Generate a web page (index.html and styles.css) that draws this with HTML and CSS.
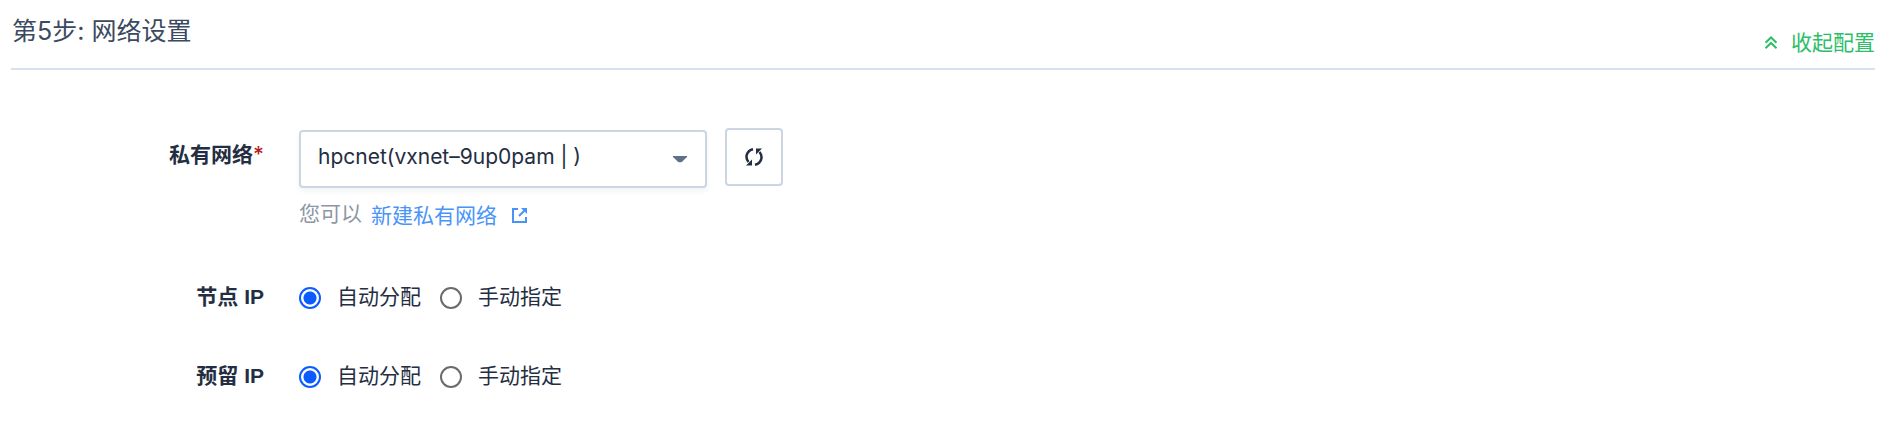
FILE: index.html
```html
<!DOCTYPE html>
<html lang="zh-CN">
<head>
<meta charset="utf-8">
<title>网络设置</title>
<link rel="stylesheet" href="styles.css">
</head>
<body>
<section class="step">
  <header class="step-header">
    <h2 class="step-title">第5步: 网络设置</h2>
    <button class="collapse" type="button">
      <svg class="collapse-icon" viewBox="0 0 14 14" aria-hidden="true"><path d="M1.5 6.7 7 1.5l5.500 5.200M1.500 12.200 7 7l5.500 5.200"/></svg>
      收起配置
    </button>
  </header>
  <form class="form">
    <div class="field field-network">
      <label class="label" for="network">私有网络<span class="required">*</span></label>
      <div class="control">
        <div class="picker">
          <select class="select" id="network">
            <option>hpcnet(vxnet–9up0pam | )</option>
          </select>
          <svg class="caret" viewBox="0 0 14 7" aria-hidden="true"><path d="M0 0h14v1L8.500 6.300h-3L0 1z"/></svg>
          <button class="refresh" type="button" aria-label="刷新">
            <svg class="refresh-icon" viewBox="0 0 18 18" aria-hidden="true">
              <path class="arc" d="M8 1.200C2 2.500-.6 9 3.500 14M10 16.800c6-1.300 8.600-7.800 4.500-12.800"/>
              <path class="head" d="M1 17.500h6v-6zM17 .5h-6v6z"/>
            </svg>
          </button>
        </div>
        <p class="help">
          <span>您可以</span>
          <a class="link" href="#">新建私有网络
            <svg class="link-icon" viewBox="0 0 16 16" aria-hidden="true">
              <path class="frame" d="M6 2H1v13h13v-5"/>
              <path class="frame" d="M7 9l5.500-5.500"/>
              <path class="head" d="M9 1h6v6z"/>
            </svg>
          </a>
        </p>
      </div>
    </div>
    <div class="field field-node" role="radiogroup" aria-labelledby="node-label">
      <span class="label" id="node-label">节点 IP</span>
      <div class="control radios">
        <label class="option"><input class="radio" type="radio" name="node" checked><span>自动分配</span></label>
        <label class="option"><input class="radio" type="radio" name="node"><span>手动指定</span></label>
      </div>
    </div>
    <div class="field" role="radiogroup" aria-labelledby="reserved-label">
      <span class="label" id="reserved-label">预留 IP</span>
      <div class="control radios">
        <label class="option"><input class="radio" type="radio" name="reserved" checked><span>自动分配</span></label>
        <label class="option"><input class="radio" type="radio" name="reserved"><span>手动指定</span></label>
      </div>
    </div>
  </form>
</section>
</body>
</html>
```
FILE: styles.css
```css
* { box-sizing: border-box; }

body {
  margin: 0;
  background: #fff;
  color: #242e42;
  font: 21px/32px Inter, "Noto Sans CJK SC", sans-serif;
}

button, select { font: inherit; color: inherit; }

.step { padding: 0 13px 0 11px; }

.step-header {
  display: flex;
  justify-content: space-between;
  align-items: flex-end;
  height: 70px;
  padding-bottom: 9px;
  border-bottom: 2px solid #d8e2ec;
}

.step-title {
  margin: 0;
  align-self: flex-start;
  padding: 15px 0 0 1px;
  font-size: 25px;
  font-weight: 400;
  line-height: 32px;
  color: #3b4a60;
}

.collapse {
  display: flex;
  align-items: center;
  gap: 13px;
  padding: 0;
  border: 0;
  background: none;
  color: #2cbe68;
  cursor: pointer;
}

.collapse-icon {
  width: 14px;
  height: 14px;
  fill: none;
  stroke: currentColor;
  stroke-width: 2;
}

.form { padding-top: 58px; }

.field {
  display: grid;
  grid-template-columns: 253px 1fr;
  column-gap: 35px;
}

.field-network { margin-bottom: 49px; }
.field-node { margin-bottom: 47px; }

.label {
  font-family: "Liberation Sans", "Noto Sans CJK SC", sans-serif;
  font-weight: 600;
  text-align: right;
}

.field-network .label { padding-top: 11px; }

.required {
  font-family: Inter, sans-serif;
  font-weight: 500;
  color: #b81d22;
}

.picker {
  display: flex;
  align-items: flex-start;
}

.select {
  width: 408px;
  height: 58px;
  margin-top: 2px;
  padding: 0 40px 4px 17px;
  appearance: none;
  border: 2px solid #ccd6e2;
  border-radius: 4px;
  background: #fff;
  box-shadow: 0 3px 5px rgba(36, 46, 66, 0.06);
}

.caret {
  width: 14px;
  height: 7px;
  margin: 28px 20px 0 -34px;
  fill: #5f708a;
  pointer-events: none;
}

.refresh {
  display: grid;
  place-items: center;
  width: 58px;
  height: 58px;
  margin-left: 18px;
  padding: 0;
  border: 2px solid #ccd6e2;
  border-radius: 4px;
  background: #fff;
}

.refresh-icon { width: 18px; height: 18px; }
.refresh-icon .arc { fill: none; stroke: #242e42; stroke-width: 2.500; }
.refresh-icon .head { fill: #242e42; }

.help {
  display: flex;
  gap: 9px;
  margin: 10px 0 0;
  color: #8c96a5;
}

.link {
  display: flex;
  align-items: center;
  gap: 15px;
  padding-top: 2px;
  color: #4a94f8;
  text-decoration: none;
}

.link-icon { width: 16px; height: 16px; margin-bottom: 3px; }
.link-icon .frame { fill: none; stroke: currentColor; stroke-width: 2; }
.link-icon .head { fill: currentColor; }

.radios { display: flex; gap: 19px; }

.option { display: flex; align-items: center; gap: 16px; }

.radio {
  appearance: none;
  width: 22px;
  height: 22px;
  margin: 2px 0 0;
  border: 2px solid #6b6b6b;
  border-radius: 50%;
  background: #fff;
}

.radio:checked {
  border-color: #0b5cff;
  background: radial-gradient(circle, #0b5cff 6px, #fff 7px);
}
```
